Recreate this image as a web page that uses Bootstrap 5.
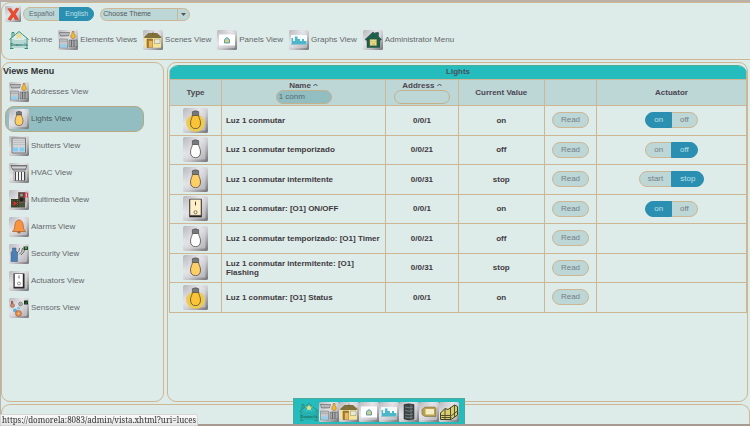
<!DOCTYPE html>
<html lang="en">
<head>
<meta charset="utf-8">
<meta name="viewport" content="width=device-width, initial-scale=1">
<title>Domorela - Lights</title>
<link href="https://cdn.jsdelivr.net/npm/bootstrap@5.3.0/dist/css/bootstrap.min.css" rel="stylesheet">
<style>
:root{--line:#cdb694;--paper:#ddebe9;--soft:#bdd6d6;--mid:#93bec1;--blue:#2a8fb0;--teal:#24bcbd;--ink:#65686a;--dark:#3f3a3e}
body{font-family:"Liberation Sans",Arial,sans-serif;font-size:8px;line-height:10px;color:var(--ink);background:var(--paper);border-top:2px solid #bcb1a9;border-left:1px solid #b9b2ad}
a{color:inherit;text-decoration:none}
.panel{border:1px solid var(--line);border-radius:9px}
.top-panel{height:58px;border-right:0;border-radius:9px 0 0 9px;padding:3px 3px 0}
.foot-panel{height:22px;border-bottom:0;border-radius:9px 9px 0 0}
.side{width:163px;padding:3px 1px}
.gap-3px{gap:3px}
.main-area{padding:2px 2px 2px 0}
.tile{width:20px;height:20px;flex:none}
.tile-lg{width:25px;height:25px}
.pill{--bs-btn-font-size:8px;--bs-btn-line-height:10px;--bs-btn-padding-x:8px;--bs-btn-padding-y:2px;--bs-btn-border-radius:8px;--bs-btn-bg:var(--soft);--bs-btn-color:#758088;--bs-btn-border-color:var(--line);--bs-btn-active-bg:var(--blue);--bs-btn-active-color:#bfe0ea;--bs-btn-active-border-color:var(--blue);--bs-btn-hover-bg:var(--mid);--bs-btn-hover-color:var(--dark);--bs-btn-hover-border-color:var(--line)}
.lang{--bs-btn-font-size:7px;--bs-btn-padding-x:5px;--bs-btn-padding-y:1px;--bs-btn-color:#5f6a70}
.close-btn{width:16px;height:16px}
.top-tools{gap:6px}
.close-gap{gap:2px}
.main-panel{padding:2px 0 0 1px}
.theme{width:90px;height:13px;border:1px solid var(--line);border-radius:8px;background:var(--soft);overflow:hidden}
.theme select{appearance:none;font-size:7px;line-height:10px;color:#52595c;padding:0 0 0 2px;min-width:0}
.theme span{width:12px;border-left:1px solid var(--line);pointer-events:none}
.top-nav{gap:6px;padding:8px 0 0 4px}
.top-nav a,.side-nav a{gap:2px}
.side h1{font-size:9px;line-height:10px;color:#333;font-weight:bold}
.side-nav{gap:1px;padding:3px 18px 0 2px}
.side-nav a{height:26px;border:1px solid transparent;border-radius:9px;padding:0 3px;color:var(--ink)}
.side-nav a.current{background:var(--mid);border-color:#b5a883;color:#4b5a60}
.grid-box{border-radius:9px 9px 0 0;overflow:hidden;border-top:1px solid #4fae96}
.lights{table-layout:fixed;color:var(--dark);font-weight:bold;line-height:9px;border-bottom:1px solid var(--line)}
.lights td,.lights th{border:1px solid var(--line);padding:0 4px;vertical-align:middle}
.lights thead tr:first-child th{background:var(--teal);height:13px;border-top:0;color:#45545f;line-height:12px}
.lights thead tr:last-child th{background:var(--soft);height:26px;padding:0;color:#4b4650}
.lights tbody tr{height:30px}
.lights tbody tr:nth-child(even){height:29px}
.c-type{width:9%}.c-name{width:28.5%}.c-addr{width:12.5%}.c-val{width:15%}.c-read{width:9%}
.filter{width:56px;height:14px;border:1px solid #c3b18d;border-radius:8px;background:transparent;font-size:8px;line-height:10px;color:#4f6a72;padding:0 2px}
.filter.filled{background:var(--mid)}
.sort{width:5px;height:4px}
.dock{background:var(--teal);height:26px;padding:3px 5px 0;border:1px solid #4da99c;border-bottom:0;bottom:2px}
.window-edge{height:2px;background:#a89a90}
.url-tip{background:linear-gradient(#fafafa,#e6e6e6);border:1px solid #d5d5d3;border-radius:0 2px 0 0;font-family:"Noto Serif","Liberation Serif",serif;font-size:8px;line-height:10px;color:#333;padding:0 1px}
</style>
</head>
<body class="vh-100 d-flex flex-column overflow-hidden">

<svg width="0" height="0" class="position-absolute" aria-hidden="true">
  <defs>
    <linearGradient id="metal" x1="0" y1="0" x2="1" y2="1"><stop offset="0" stop-color="#b5b5b9"/><stop offset=".35" stop-color="#e6e6ea"/><stop offset=".6" stop-color="#c6c6ca"/><stop offset="1" stop-color="#737377"/></linearGradient>
    <linearGradient id="face" x1="0" y1="0" x2="1" y2="1"><stop offset="0" stop-color="#c2c2c6"/><stop offset=".4" stop-color="#e3e3e7"/><stop offset="1" stop-color="#b4b4b8"/></linearGradient>
  </defs>
  <symbol id="base" viewBox="0 0 40 40"><rect width="40" height="40" rx="3" fill="url(#metal)"/><rect x="4" y="4" width="32" height="32" rx="3" fill="url(#face)"/></symbol>
  <symbol id="bulb" viewBox="0 0 40 40"><path d="M15 12V6q5-3 10 0v6z" fill="#77797b" stroke="#444" stroke-width="1"/><path d="M15 12h10c0 4 3 6 3 12 0 6-3 9-8 9s-8-3-8-9c0-6 3-8 3-12z" fill="currentColor" stroke="#555045" stroke-width="1.3"/></symbol>
  <symbol id="i-lit" viewBox="0 0 40 40"><use href="#base"/><ellipse cx="20" cy="24" rx="15" ry="14" fill="#eecb4c"/><use href="#bulb" color="#fbc335"/></symbol>
  <symbol id="i-off" viewBox="0 0 40 40"><use href="#base"/><use href="#bulb" color="#fff"/></symbol>
  <symbol id="i-warm" viewBox="0 0 40 40"><use href="#base"/><use href="#bulb" color="#ffcf66"/></symbol>
  <symbol id="i-switch" viewBox="0 0 40 40"><use href="#base"/><path d="M10 5h20v29H10z" fill="#222"/><path d="M11 5h18v26H11z" fill="#fff0c8" stroke="#333"/><path d="M20 9v6" stroke="#333" stroke-width="1.5"/><circle cx="20" cy="26" r="2.5" fill="none" stroke="#333"/></symbol>
  <symbol id="i-actuator" viewBox="0 0 40 40"><use href="#base"/><path d="M9 5h22v30H9z" fill="#222"/><path d="M11 5h17v27H11z" fill="#fff" stroke="#444"/><path d="M20 9v6" stroke="#333" stroke-width="1.5"/><circle cx="20" cy="25" r="3" fill="none" stroke="#333"/></symbol>
  <symbol id="i-home" viewBox="0 0 40 40"><path d="M1 19 20 3l19 16M4 17v20M36 17v20M10 12V5H6v10" fill="none" stroke="#2f8d7c" stroke-width="2"/><path d="M8 18v18M12 20v16M16 20v16M20 20v16M24 20v16M28 20v16M32 18v18" stroke="#2f8d7c" stroke-width="1.5" opacity=".55"/><path d="M2 37h7M31 37h7" stroke="#2f8d7c" stroke-width="2"/><circle cx="20" cy="12" r="4" fill="#ecdf8a"/><path d="M20 5v4M13 9l4 2M27 9l-4 2M15 17l3-3M25 17l-3-3" stroke="#e0c964" stroke-width="1.5"/><text x="20" y="31" text-anchor="middle" font-family="Liberation Serif" font-weight="bold" font-size="8" fill="#1d7565">Domorela</text></symbol>
  <symbol id="i-elements" viewBox="0 0 40 40"><use href="#base"/><path d="M3 5h20l-2 7H5z" fill="#a5a7ac" stroke="#555"/><path d="M4 8h18" stroke="#eee"/><path d="M3 18h16v18H3z" fill="#c7c9cc" stroke="#666"/><path d="M4 20h14M4 23h14" stroke="#999"/><path d="M5 29h12v6H5z" fill="#8dd0ef"/><path d="M22 20h16v14H22z" fill="#a6a8ab" stroke="#555"/><path d="M27 20v14M32 20v14" stroke="#555" stroke-width="1.5"/><path d="M28 3h4v4c3 3 4 10-2 10s-5-7-2-10z" fill="#f5b82e" stroke="#7b6020"/></symbol>
  <symbol id="i-scenes" viewBox="0 0 40 40"><use href="#base"/><path d="M3 13 14 6h14l8 7v22H3z" fill="#f4e493"/><path d="m2 14 9-8h17l9 8-1 2H3z" fill="#80713c"/><path d="M8 18h11v17H8z" fill="#b07f36" stroke="#6d5328"/><path d="M12 22h7v13h-7z" fill="#e8b963"/><path d="M23 18h11v9H23z" fill="#e6e9d8" stroke="#8f8e68"/><path d="M20 3v7" stroke="#444"/></symbol>
  <symbol id="i-panels" viewBox="0 0 40 40"><use href="#base"/><path d="M4 9h32v22H4z" fill="#fff"/><path d="m15 19 5-4 5 4v7H15z" fill="#a9cfc6" stroke="#458777" stroke-width="1.5"/><path d="M17 20h6v4h-6z" fill="#dccb78"/></symbol>
  <symbol id="i-graphs" viewBox="0 0 40 40"><use href="#base"/><path d="M4 10h32v20H4z" fill="#f5fafb"/><path d="M5 28V16h3v6h4v-9h5v5h5v4h4v-4h4v4h5v6z" fill="#4cb7cb"/><path d="M4 29h32" stroke="#318b9c"/></symbol>
  <symbol id="i-admin" viewBox="0 0 40 40"><use href="#base"/><path d="M4 19 20 4l5 4V5h6v8l6 6-3 2v14H8V21z" fill="#1d5f4a" stroke="#184638"/><path d="M14 19h13v12H14z" fill="#e9da86" stroke="#b5a85b"/><path d="M17 23h2M23 23h2M18 28h6" stroke="#8d7d3d"/></symbol>
  <symbol id="i-shutter" viewBox="0 0 40 40"><use href="#base"/><path d="M6 4h27v30H6z" fill="#d2d4d6" stroke="#777" stroke-width="2"/><path d="M7 9h25M7 13h25M7 17h25" stroke="#aaa"/><path d="M8 23h10v8H8zM21 23h10v8H21z" fill="#82cef2"/></symbol>
  <symbol id="i-hvac" viewBox="0 0 40 40"><use href="#base"/><path d="M4 5h32l-3 9H8z" fill="#a9abae" stroke="#555" stroke-width="1.5"/><path d="M6 9h28" stroke="#ddd" stroke-width="1.5"/><path d="M10 17h22v18H10z" fill="#f2f2f2" stroke="#555"/><path d="M13 18v17M19 18v17M25 18v17M31 18v17" stroke="#444" stroke-width="2"/></symbol>
  <symbol id="i-media" viewBox="0 0 40 40"><use href="#base"/><path d="M19 5h13v20H19z" fill="#5a4535" stroke="#3b3028"/><circle cx="25" cy="10" r="3" fill="#999"/><circle cx="25" cy="19" r="4" fill="#222"/><path d="M4 18h16v17H4z" fill="#35432b"/><path d="M6 20v13M17 20v13" stroke="#8c9a6b" stroke-dasharray="2 2"/><path d="m9 22 8 5-8 5z" fill="#e32828"/><path d="M20 26h12v9H20z" fill="#4a5137"/><path d="M32 14V6h5v8M30 14h3M35 14h3" fill="none" stroke="#e32844" stroke-width="2"/></symbol>
  <symbol id="i-alarm" viewBox="0 0 40 40"><use href="#base"/><path d="M7 29c5-5 4-9 5-15 1-5 4-8 8-8s7 3 8 8c1 6 0 10 5 15z" fill="#f89440" stroke="#a9622f" stroke-width="1.5"/><path d="M17 30q3 6 6 0z" fill="#e2802f" stroke="#754428"/></symbol>
  <symbol id="i-security" viewBox="0 0 40 40"><use href="#base"/><path d="M7 8h7v5l3 4v18H4V17l3-4z" fill="#4b7fb4" stroke="#34567a"/><path d="M16 18q5-2 5-10M20 21q7-4 7-13M24 22q7-5 8-13" fill="none" stroke="#444" stroke-width="1.5"/><path d="M29 5h9v7h-9z" fill="#24442b"/><circle cx="34" cy="8" r="2" fill="#4fc653"/></symbol>
  <symbol id="i-sensors" viewBox="0 0 40 40"><use href="#base"/><path d="M6 6v8" stroke="#b5533c" stroke-width="4"/><circle cx="7" cy="15" r="4" fill="#d98367" stroke="#666"/><circle cx="23" cy="12" r="4" fill="#aaa" stroke="#666"/><path d="M30 5h8v8h-8z" fill="#162f1b"/><path d="m32 9 2 2 3-4" stroke="#4dd05a" fill="none"/><circle cx="12" cy="25" r="4" fill="#5daed0"/><circle cx="19" cy="20" r="3" fill="#86c6dd"/><circle cx="19" cy="31" r="6" fill="#e38a50" stroke="#8e4930"/><circle cx="19" cy="31" r="2" fill="#f5cf77"/></symbol>
  <symbol id="i-rack" viewBox="0 0 40 40"><use href="#base"/><path d="M10 5q10-3 20 0v29q-10 4-20 0z" fill="#3c4446" stroke="#222"/><path d="M12 10q8 3 16 0M12 17q8 3 16 0M12 24q8 3 16 0M12 30q8 3 16 0" fill="none" stroke="#88928e" stroke-width="1.5"/><path d="M24 5v30" stroke="#6d7877" stroke-width="2"/></symbol>
  <symbol id="i-plate" viewBox="0 0 40 40"><use href="#base"/><path d="m6 15 6-5h20l2 3v16H12l-6-4z" fill="#b99f52" stroke="#70622f"/><path d="M13 14h17v11H13z" fill="#f4ecc3"/></symbol>
  <symbol id="i-plan" viewBox="0 0 40 40"><use href="#base"/><path d="m3 22 9-9 6 2 13-9 6 3v17l-13 9H3z" fill="#d8ce73" stroke="#444326" stroke-width="2"/><path d="M12 13v22M23 11v23M31 6v24M3 27h22l12-9M5 31h20" fill="none" stroke="#55502c" stroke-width="2"/></symbol>
  <symbol id="i-close" viewBox="0 0 40 40"><use href="#base"/><path d="m7 7 8-1 6 9 7-10 7 2-9 13 8 14-8 1-5-9-7 10-7-3 9-13z" fill="#ee4a2c" stroke="#b9301c"/></symbol>
  <symbol id="i-up" viewBox="0 0 10 8"><path d="m1 6 4-4 4 4" fill="none" stroke="#4b4650" stroke-width="2"/></symbol>
</svg>

<header class="panel top-panel">
  <div class="d-flex align-items-center top-tools">
    <div class="d-flex align-items-center close-gap">
      <button type="button" class="btn p-0 border-0 close-btn d-flex" aria-label="Log out"><svg class="close-btn"><use href="#i-close"/></svg></button>
      <div class="btn-group" role="group" aria-label="Language">
        <input type="radio" class="btn-check" name="lang" id="lang-es"><label class="btn pill lang" for="lang-es">Español</label>
        <input type="radio" class="btn-check" name="lang" id="lang-en" checked><label class="btn pill lang" for="lang-en">English</label>
      </div>
    </div>
    <div class="theme d-flex">
      <select class="border-0 bg-transparent flex-grow-1" aria-label="Theme"><option>Choose Theme</option></select>
      <span class="d-flex align-items-center justify-content-center"><svg width="5" height="3" viewBox="0 0 5 3"><path d="M0 0h5L2.500 3z" fill="#555"/></svg></span>
    </div>
  </div>
  <nav class="d-flex top-nav" aria-label="Main">
    <a href="#" class="d-flex align-items-center"><svg class="tile"><use href="#i-home"/></svg>Home</a>
    <a href="#" class="d-flex align-items-center"><svg class="tile"><use href="#i-elements"/></svg>Elements Views</a>
    <a href="#" class="d-flex align-items-center"><svg class="tile"><use href="#i-scenes"/></svg>Scenes View</a>
    <a href="#" class="d-flex align-items-center"><svg class="tile"><use href="#i-panels"/></svg>Panels View</a>
    <a href="#" class="d-flex align-items-center"><svg class="tile"><use href="#i-graphs"/></svg>Graphs View</a>
    <a href="#" class="d-flex align-items-center"><svg class="tile"><use href="#i-admin"/></svg>Administrator Menu</a>
  </nav>
</header>

<div class="d-flex flex-grow-1 main-area gap-3px">
  <aside class="panel side flex-shrink-0">
    <h1 class="m-0">Views Menu</h1>
    <nav class="d-flex flex-column side-nav" aria-label="Views">
      <a href="#" class="d-flex align-items-center"><svg class="tile"><use href="#i-elements"/></svg>Addresses View</a>
      <a href="#" class="d-flex align-items-center current" aria-current="page"><svg class="tile"><use href="#i-warm"/></svg>Lights View</a>
      <a href="#" class="d-flex align-items-center"><svg class="tile"><use href="#i-shutter"/></svg>Shutters View</a>
      <a href="#" class="d-flex align-items-center"><svg class="tile"><use href="#i-hvac"/></svg>HVAC View</a>
      <a href="#" class="d-flex align-items-center"><svg class="tile"><use href="#i-media"/></svg>Multimedia View</a>
      <a href="#" class="d-flex align-items-center"><svg class="tile"><use href="#i-alarm"/></svg>Alarms View</a>
      <a href="#" class="d-flex align-items-center"><svg class="tile"><use href="#i-security"/></svg>Security View</a>
      <a href="#" class="d-flex align-items-center"><svg class="tile"><use href="#i-actuator"/></svg>Actuators View</a>
      <a href="#" class="d-flex align-items-center"><svg class="tile"><use href="#i-sensors"/></svg>Sensors View</a>
    </nav>
  </aside>

  <main class="panel main-panel flex-grow-1">
    <div class="grid-box">
      <table class="lights w-100 text-center">
        <colgroup><col class="c-type"><col class="c-name"><col class="c-addr"><col class="c-val"><col class="c-read"><col></colgroup>
        <thead>
          <tr><th colspan="6" scope="colgroup">Lights</th></tr>
          <tr>
            <th scope="col">Type</th>
            <th scope="col"><div>Name <svg class="sort"><use href="#i-up"/></svg></div><input class="filter filled" type="text" value="1 conm" aria-label="Filter by name"></th>
            <th scope="col"><div>Address <svg class="sort"><use href="#i-up"/></svg></div><input class="filter" type="text" aria-label="Filter by address"></th>
            <th scope="col">Current Value</th><th></th><th scope="col">Actuator</th>
          </tr>
        </thead>
        <tbody>
          <tr><td><svg class="tile-lg"><use href="#i-lit"/></svg></td><td class="text-start">Luz 1 conmutar</td><td>0/0/1</td><td>on</td><td><button type="button" class="btn pill">Read</button></td>
            <td><div class="btn-group" role="group" aria-label="Luz 1 conmutar"><input type="radio" class="btn-check" name="a1" id="a1on" checked><label class="btn pill" for="a1on">on</label><input type="radio" class="btn-check" name="a1" id="a1off"><label class="btn pill" for="a1off">off</label></div></td></tr>
          <tr><td><svg class="tile-lg"><use href="#i-off"/></svg></td><td class="text-start">Luz 1 conmutar temporizado</td><td>0/0/21</td><td>off</td><td><button type="button" class="btn pill">Read</button></td>
            <td><div class="btn-group" role="group" aria-label="Luz 1 conmutar temporizado"><input type="radio" class="btn-check" name="a2" id="a2on"><label class="btn pill" for="a2on">on</label><input type="radio" class="btn-check" name="a2" id="a2off" checked><label class="btn pill" for="a2off">off</label></div></td></tr>
          <tr><td><svg class="tile-lg"><use href="#i-warm"/></svg></td><td class="text-start">Luz 1 conmutar intermitente</td><td>0/0/31</td><td>stop</td><td><button type="button" class="btn pill">Read</button></td>
            <td><div class="btn-group" role="group" aria-label="Luz 1 conmutar intermitente"><input type="radio" class="btn-check" name="a3" id="a3on"><label class="btn pill" for="a3on">start</label><input type="radio" class="btn-check" name="a3" id="a3off" checked><label class="btn pill" for="a3off">stop</label></div></td></tr>
          <tr><td><svg class="tile-lg"><use href="#i-switch"/></svg></td><td class="text-start">Luz 1 conmutar: [O1] ON/OFF</td><td>0/0/1</td><td>on</td><td><button type="button" class="btn pill">Read</button></td>
            <td><div class="btn-group" role="group" aria-label="Luz 1 conmutar: [O1] ON/OFF"><input type="radio" class="btn-check" name="a4" id="a4on" checked><label class="btn pill" for="a4on">on</label><input type="radio" class="btn-check" name="a4" id="a4off"><label class="btn pill" for="a4off">off</label></div></td></tr>
          <tr><td><svg class="tile-lg"><use href="#i-off"/></svg></td><td class="text-start">Luz 1 conmutar temporizado: [O1] Timer</td><td>0/0/21</td><td>off</td><td><button type="button" class="btn pill">Read</button></td><td></td></tr>
          <tr><td><svg class="tile-lg"><use href="#i-warm"/></svg></td><td class="text-start">Luz 1 conmutar intermitente: [O1]<br>Flashing</td><td>0/0/31</td><td>stop</td><td><button type="button" class="btn pill">Read</button></td><td></td></tr>
          <tr><td><svg class="tile-lg"><use href="#i-lit"/></svg></td><td class="text-start">Luz 1 conmutar: [O1] Status</td><td>0/0/1</td><td>on</td><td><button type="button" class="btn pill">Read</button></td><td></td></tr>
        </tbody>
      </table>
    </div>
  </main>
</div>

<footer class="panel foot-panel"></footer>
<div class="window-edge position-fixed bottom-0 start-0 w-100"></div>
<nav class="dock position-fixed start-50 translate-middle-x d-flex ms-1" aria-label="Dock">
  <a href="#" class="d-flex" aria-label="Home"><svg class="tile"><use href="#i-home"/></svg></a>
  <a href="#" class="d-flex" aria-label="Elements"><svg class="tile"><use href="#i-elements"/></svg></a>
  <a href="#" class="d-flex" aria-label="Scenes"><svg class="tile"><use href="#i-scenes"/></svg></a>
  <a href="#" class="d-flex" aria-label="Panels"><svg class="tile"><use href="#i-panels"/></svg></a>
  <a href="#" class="d-flex" aria-label="Graphs"><svg class="tile"><use href="#i-graphs"/></svg></a>
  <a href="#" class="d-flex" aria-label="Devices"><svg class="tile"><use href="#i-rack"/></svg></a>
  <a href="#" class="d-flex" aria-label="Plates"><svg class="tile"><use href="#i-plate"/></svg></a>
  <a href="#" class="d-flex" aria-label="Plan"><svg class="tile"><use href="#i-plan"/></svg></a>
</nav>
<div class="url-tip position-fixed bottom-0 start-0">https://domorela:8083/admin/vista.xhtml?uri=luces</div>

<script src="https://cdn.jsdelivr.net/npm/bootstrap@5.3.0/dist/js/bootstrap.bundle.min.js"></script>
</body>
</html>
